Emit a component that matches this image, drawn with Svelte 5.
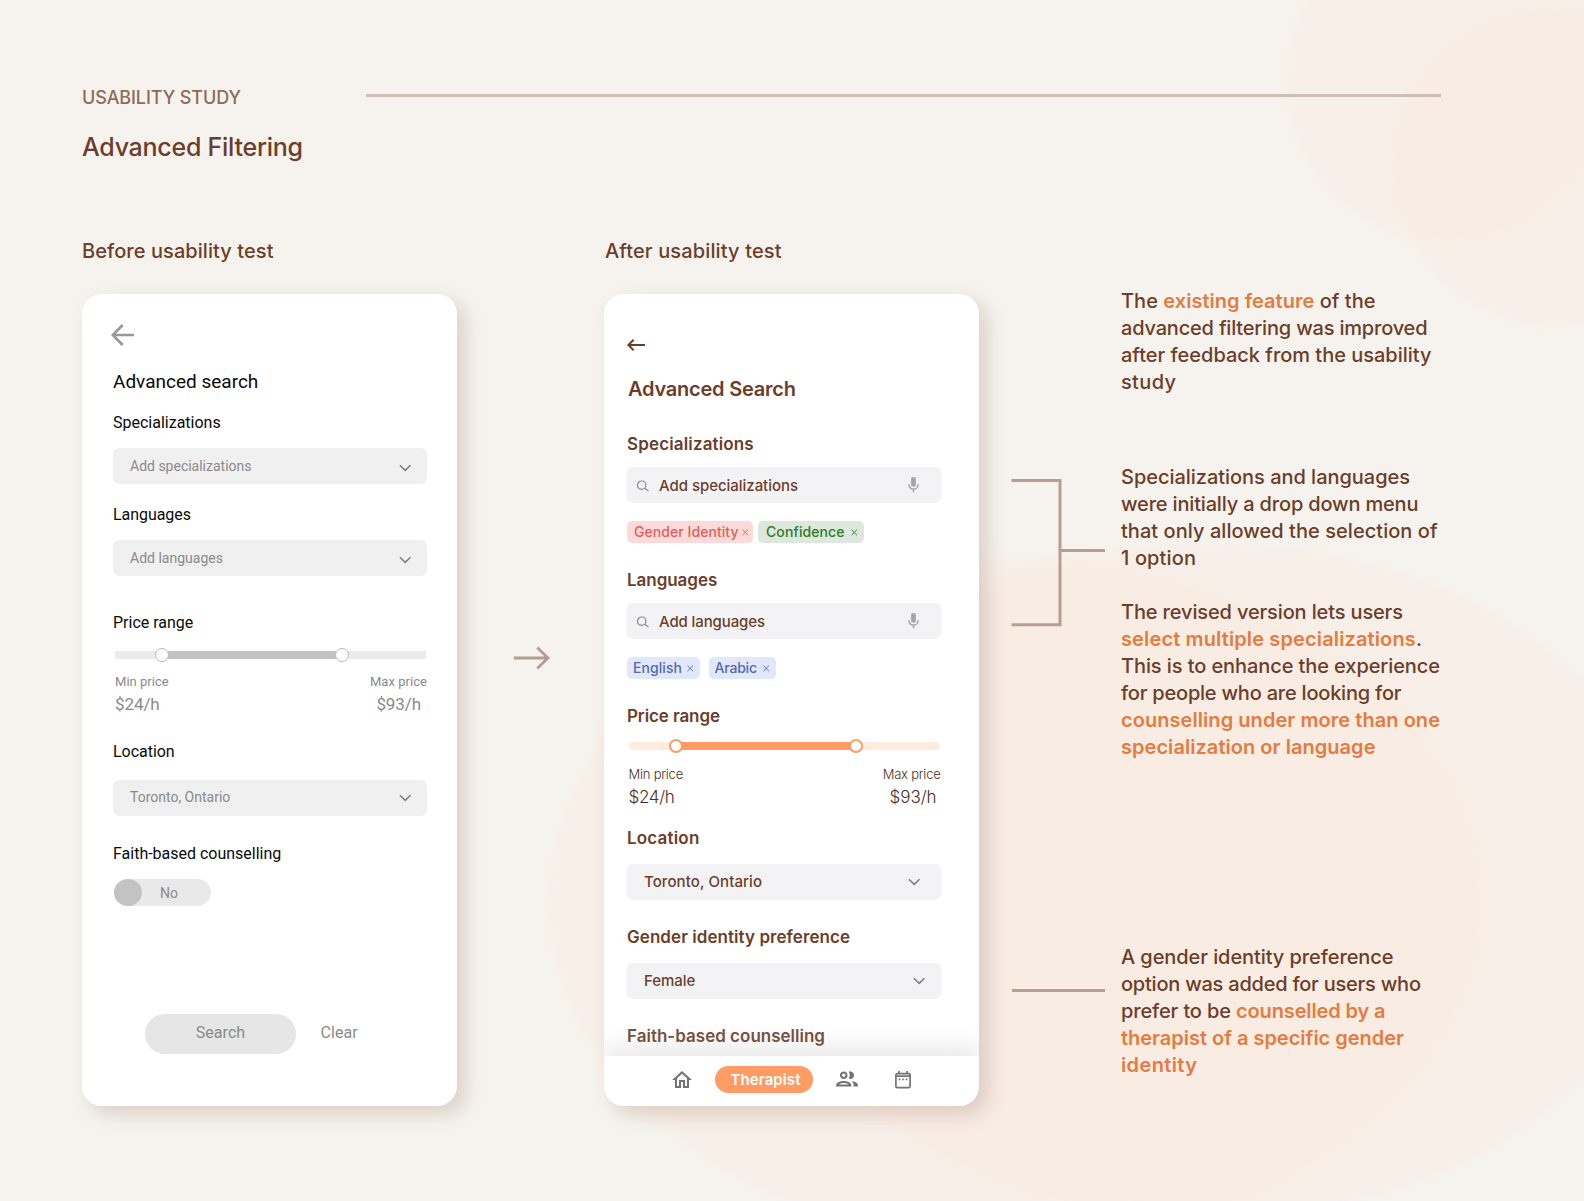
<script>
  // Spreads the letters of a line so that it spans the given width.
  function fit(node, width) {
    const letters = node.textContent.length;
    const natural = node.getBoundingClientRect().width;
    node.style.letterSpacing = `${(width + 1 - natural) / (letters - 1)}px`;
  }

  const notes = [
    {
      kind: 'intro',
      lines: [
        [253.5, ['The '], ['existing feature', true], [' of the']],
        [305.5, ['advanced filtering was improved']],
        [309.5, ['after feedback from the usability']],
        [54, ['study']]
      ]
    },
    {
      kind: 'menus',
      lines: [
        [288, ['Specializations and languages']],
        [296.5, ['were initially a drop down menu']],
        [315.5, ['that only allowed the selection of']],
        [74, ['1 option']]
      ]
    },
    {
      kind: 'multiple',
      lines: [
        [281, ['The revised version lets users']],
        [300, ['select multiple specializations', true], ['.']],
        [318, ['This is to enhance the experience']],
        [279.5, ['for people who are looking for']],
        [318, ['counselling under more than one', true]],
        [253.5, ['specialization or language', true]]
      ]
    },
    {
      kind: 'preference',
      lines: [
        [271.5, ['A gender identity preference']],
        [299, ['option was added for users who']],
        [263.5, ['prefer to be '], ['counselled by a', true]],
        [282, ['therapist of a specific gender', true]],
        [75, ['identity', true]]
      ]
    }
  ];
</script>

{#snippet chevron()}
  <svg class="chevron" width="13" height="8" viewBox="0 0 13 8"><path d="M.9 1.2 6.2 6.4 11.5 1.2" /></svg>
{/snippet}

{#snippet cross()}
  <svg class="cross" width="7" height="7" viewBox="0 0 7 7"><path d="M.4.6 6 6.2M6 .6.4 6.2" /></svg>
{/snippet}

{#snippet glass()}
  <svg class="glass" width="13" height="12" viewBox="0 0 13 12"><circle cx="4.7" cy="5.2" r="4.2" /><path d="M7.8 8.2 11.5 10.9" /></svg>
{/snippet}

{#snippet mic()}
  <svg class="mic" width="12" height="16" viewBox="0 0 12 16">
    <rect x="3.1" y="0" width="4.8" height="9.8" rx="2.2" />
    <path d="M.8 7.2a4.7 4.9 0 0 0 9.4 0M5.5 12.3V15.3" />
  </svg>
{/snippet}

<div class="page">
  <svg class="backdrop" width="1584" height="1201" viewBox="0 0 1584 1201">
    <defs>
      <filter id="soft" x="-10%" y="-10%" width="120%" height="120%"><feGaussianBlur stdDeviation="8" /></filter>
    </defs>
    <g fill="#ffcfb6" fill-opacity=".115">
      <circle cx="1448" cy="80" r="163" filter="url(#soft)" />
      <circle cx="1553" cy="168" r="159" filter="url(#soft)" />
      <ellipse cx="1016" cy="902" rx="468" ry="344" filter="url(#soft)" />
      <ellipse cx="1212" cy="880" rx="462" ry="338" filter="url(#soft)" />
    </g>
  </svg>

  <header>
    <div class="eyebrow-row">
      <div class="eyebrow"><span use:fit={158}>USABILITY STUDY</span></div>
      <div class="rule"></div>
    </div>
    <h1 use:fit={220}>Advanced Filtering</h1>
  </header>

  <main>
    <h2 class="before-title" use:fit={190.5}>Before usability test</h2>
    <h2 class="after-title" use:fit={175.5}>After usability test</h2>

    <section class="card before">
      <svg class="back" width="24" height="22" viewBox="0 0 24 22"><path d="M23 11H2M11.6 1 1.8 11l9.8 10" /></svg>
      <h3 use:fit={144.3}>Advanced search</h3>
      <h4 use:fit={106.7}>Specializations</h4>
      <div class="field low"><span use:fit={120.5}>Add specializations</span>{@render chevron()}</div>
      <h4 use:fit={77}>Languages</h4>
      <div class="field low"><span use:fit={92}>Add languages</span>{@render chevron()}</div>
      <h4 class="price" use:fit={79.3}>Price range</h4>
      <div class="slider"><i></i><b></b><b></b></div>
      <div class="ends caption"><span use:fit={52.7}>Min price</span><span use:fit={56}>Max price</span></div>
      <div class="ends amount"><span use:fit={43.7}>$24/h</span><span use:fit={43.7}>$93/h</span></div>
      <h4 class="location" use:fit={60.7}>Location</h4>
      <div class="field place"><span use:fit={99.3}>Toronto, Ontario</span>{@render chevron()}</div>
      <h4 class="faith" use:fit={167.3}>Faith-based counselling</h4>
      <div class="toggle"><i></i><span>No</span></div>
      <div class="actions">
        <div class="search"><span use:fit={48.3}>Search</span></div>
        <span class="clear" use:fit={36.3}>Clear</span>
      </div>
    </section>

    <div class="between">
      <svg width="37" height="24" viewBox="0 0 37 24"><path d="M0 12H34M23.2 1.5 34 12 23.2 22.5" /></svg>
    </div>

    <section class="card after">
      <svg class="back" width="18" height="12" viewBox="0 0 18 12"><path d="M18 6H1.5M6.6.8 1.4 6l5.2 5.2" /></svg>
      <h3 use:fit={168}>Advanced Search</h3>
      <h4 class="first" use:fit={125.7}>Specializations</h4>
      <div class="field entry">{@render glass()}<span use:fit={138}>Add specializations</span>{@render mic()}</div>
      <div class="chips">
        <div class="chip red"><span use:fit={103.5}>Gender Identity</span>{@render cross()}</div>
        <div class="chip green"><span use:fit={77.5}>Confidence</span>{@render cross()}</div>
      </div>
      <h4 use:fit={89.3}>Languages</h4>
      <div class="field entry">{@render glass()}<span use:fit={105}>Add languages</span>{@render mic()}</div>
      <div class="chips languages">
        <div class="chip blue"><span use:fit={48}>English</span>{@render cross()}</div>
        <div class="chip blue arabic"><span use:fit={41.5}>Arabic</span>{@render cross()}</div>
      </div>
      <h4 use:fit={92}>Price range</h4>
      <div class="slider"><i></i><b></b><b></b></div>
      <div class="ends caption"><span use:fit={53.7}>Min price</span><span use:fit={57}>Max price</span></div>
      <div class="ends amount"><span use:fit={45.3}>$24/h</span><span use:fit={46}>$93/h</span></div>
      <h4 class="location" use:fit={71.3}>Location</h4>
      <div class="field place"><span use:fit={117}>Toronto, Ontario</span>{@render chevron()}</div>
      <h4 use:fit={222}>Gender identity preference</h4>
      <div class="field place gender"><span use:fit={50.3}>Female</span>{@render chevron()}</div>
      <h4 use:fit={197}>Faith-based counselling</h4>
      <nav>
        <svg class="home" width="24" height="24" viewBox="0 0 24 24"><path d="M12 5.69l5 4.5V18h-2v-6H9v6H7v-7.81l5-4.5M12 3L2 12h3v8h6v-6h2v6h6v-8h3L12 3z" /></svg>
        <div class="pill"><span use:fit={69}>Therapist</span></div>
        <svg class="people" width="26" height="26" viewBox="0 0 24 24"><path d="M9 13.75c-2.34 0-7 1.17-7 3.5V19h14v-1.75c0-2.33-4.66-3.5-7-3.5zM4.34 17c.84-.58 2.87-1.25 4.66-1.25s3.82.67 4.66 1.25H4.34zM9 12c1.93 0 3.5-1.57 3.5-3.5S10.93 5 9 5 5.5 6.57 5.5 8.5 7.07 12 9 12zm0-5c.83 0 1.5.67 1.5 1.5S9.83 10 9 10s-1.5-.67-1.5-1.5S8.17 7 9 7zm7.04 6.81c1.16.84 1.96 1.96 1.96 3.44V19h4v-1.75c0-2.02-3.5-3.17-5.96-3.44zM15 12c1.93 0 3.5-1.57 3.5-3.5S16.93 5 15 5c-.54 0-1.04.13-1.5.35.63.89 1 1.98 1 3.15s-.37 2.26-1 3.15c.46.22.96.35 1.5.35z" /></svg>
        <svg class="calendar" width="16" height="18" viewBox="0 0 16 18">
          <rect x=".9" y="2.7" width="14.2" height="13.9" rx="1.4" />
          <path d="M1 5.1H15" /><path d="M3.9 0V3M12.1 0V3" />
          <path class="dots" d="M3.7 8.4H5.3M7.2 8.4H8.8M10.7 8.4H12.3" />
        </svg>
      </nav>
    </section>

    <svg class="links" width="142" height="812" viewBox="979 294 142 812">
      <path d="M1011.5 480.5H1060V624.8H1011.5M1060 550.5H1105M1012 990.5H1105" />
    </svg>

    <aside>
      {#each notes as note}
        <p class={note.kind}>
          {#each note.lines as [width, ...parts]}
            <span class="line" use:fit={width}>{#each parts as [text, strong]}{#if strong}<em>{text}</em>{:else}{text}{/if}{/each}</span>
          {/each}
        </p>
      {/each}
    </aside>
  </main>
</div>

<style>
  :global(body) {
    background: #f6f3ee;
  }
  .page {
    position: relative;
    box-sizing: border-box;
    width: 1584px;
    height: 1201px;
    overflow: hidden;
    padding: 84px 0 0 82px;
    color: #6b3d2a;
    font-family: Inter, 'Noto Sans', sans-serif;
    white-space: nowrap;
  }
  .backdrop {
    position: absolute;
    inset: 0;
  }
  header,
  main {
    position: relative;
  }
  h1, h2, h3, h4, p {
    margin: 0;
    width: fit-content;
  }
  svg {
    display: block;
    flex: none;
    fill: none;
  }

  .eyebrow-row {
    display: flex;
    height: 24px;
    align-items: center;
  }
  .eyebrow {
    width: 284px;
    padding-top: 3px;
    font-size: 18px;
    font-weight: 450;
    line-height: 24px;
    color: #8f6a5a;
  }
  .rule {
    width: 1075px;
    height: 3px;
    margin-bottom: 1px;
    background: #cfbeb4;
  }
  h1 {
    margin-top: 23px;
    font-size: 25px;
    font-weight: 500;
    line-height: 32px;
  }

  main {
    display: grid;
    grid-template-columns: 375px 147px 375px 142px auto;
    grid-template-rows: 28px 812px;
    row-gap: 29px;
    margin-top: 74px;
  }
  h2 {
    font-size: 20px;
    font-weight: 500;
    line-height: 28px;
  }
  .after-title {
    grid-column: 3;
    margin-left: 1px;
  }
  .card {
    grid-row: 2;
    box-sizing: border-box;
    display: flex;
    flex-direction: column;
    overflow: hidden;
    border-radius: 20px;
    background: #fff;
    box-shadow: 8px 8px 20px rgba(107, 58, 38, 0.19);
  }
  .between {
    grid-area: 2 / 2;
    padding: 352px 0 0 57px;
  }
  .between path {
    stroke: #b59c90;
    stroke-width: 2.8;
  }
  .links {
    grid-area: 2 / 4;
  }
  .links path {
    stroke: #b79e90;
    stroke-width: 3;
  }

  h4 {
    line-height: 20px;
  }
  .field {
    box-sizing: border-box;
    display: flex;
    justify-content: space-between;
    flex: none;
    height: 36px;
    border-radius: 6px;
  }
  .chevron {
    stroke: #7d7d7d;
    stroke-width: 1.5;
  }
  .slider {
    display: grid;
    grid-template-columns: 47px 180px 84px;
    align-items: center;
    height: 14px;
    margin-left: 2px;
  }
  .slider i {
    grid-area: 1 / 1 / 2 / 4;
    height: 8px;
  }
  .slider b {
    grid-row: 1;
    grid-column: 3;
    box-sizing: border-box;
    width: 14px;
    height: 14px;
    margin-left: -7px;
    border-radius: 50%;
    background: #fff;
  }
  .slider b:first-of-type {
    grid-column: 2;
  }
  .ends {
    display: flex;
    justify-content: space-between;
    margin-left: 2px;
  }
  .caption {
    font-size: 13px;
    line-height: 16px;
  }
  .amount {
    font-size: 17px;
    line-height: 20px;
  }

  .before {
    grid-column: 1;
    padding: 30px 30px 0 31px;
    font-family: Roboto, sans-serif;
    color: #8a8a8a;
  }
  .before .back {
    margin-left: -2px;
    stroke: #989898;
    stroke-width: 2.7;
  }
  .before h3,
  .before h4 {
    color: #0a0a0a;
    font-weight: 400;
  }
  .before h3 {
    margin: 23px 0 -2px;
    font-size: 19px;
    line-height: 26px;
  }
  .before h4 {
    margin: 20px 0 -2px;
    font-size: 16px;
    line-height: 22px;
  }
  .before h3 + h4 {
    margin-top: 19px;
  }
  .before h4.price {
    margin-top: 36px;
  }
  .before .field {
    margin-top: 16px;
    padding: 0 15px 0 17px;
    background: #f0f0f0;
    font-size: 14px;
    line-height: 36px;
  }
  .before .chevron {
    margin-top: 16px;
  }
  .before .slider {
    margin-top: 16px;
  }
  .before .slider i {
    background: linear-gradient(to right, #ebebeb 47px, #c3c3c3 47px 227px, #ebebeb 227px);
  }
  .before .slider b {
    border: 1px solid #b9b9b9;
  }
  .before .caption {
    margin-top: 12px;
  }
  .before .amount {
    margin-top: 4px;
    padding-right: 6px;
  }
  .before h4.location,
  .before h4.faith {
    margin-top: 27px;
  }
  .before .place {
    margin-top: 19px;
    line-height: 34px;
  }
  .before .place .chevron {
    margin-top: 14px;
  }
  .toggle {
    display: flex;
    width: 97px;
    height: 27px;
    margin: 16px 0 0 1px;
    border-radius: 14px;
    background: #e9e9e9;
    font-size: 14px;
    line-height: 28px;
  }
  .toggle i {
    width: 28px;
    margin-right: 18px;
    border-radius: 50%;
    background: #c3c3c3;
  }
  .actions {
    display: flex;
    margin: 108px 0 0 32px;
    font-size: 16px;
    line-height: 37px;
  }
  .search {
    width: 151px;
    height: 40px;
    margin-right: 24.5px;
    border-radius: 20px;
    background: #e6e6e6;
    text-align: center;
  }

  .after {
    grid-column: 3;
    padding-top: 45px;
  }
  .after > :not(nav) {
    margin-left: 23px;
  }
  .after .back {
    stroke: #6b3d2a;
    stroke-width: 2;
  }
  .after h3 {
    margin-top: 26px;
    padding-left: 1px;
    font-size: 20px;
    font-weight: 600;
    line-height: 24px;
  }
  .after h4 {
    margin-top: 27px;
    font-size: 17px;
    font-weight: 600;
  }
  .after h4.first {
    margin-top: 33px;
  }
  .after h4.location {
    margin-top: 21px;
  }
  .after h4:last-of-type {
    color: #7a5241;
  }
  .after .field {
    width: 314px;
    margin-top: 13px;
    background: #f3f3f6;
    font-size: 15px;
    font-weight: 500;
    line-height: 37px;
  }
  .entry .glass {
    margin: 13px 9px 0 10px;
    stroke: #8a8a8e;
    stroke-width: 1.2;
  }
  .entry .mic {
    margin: 10px 21px 0 auto;
  }
  .mic rect {
    fill: #a5a5a5;
  }
  .mic path {
    stroke: #a5a5a5;
    stroke-width: 1.5;
  }
  .after .place {
    margin-top: 16px;
    padding: 0 20px 0 17px;
    line-height: 35px;
  }
  .after .gender {
    padding-right: 15px;
  }
  .after .chevron {
    margin-top: 14px;
  }
  .chips {
    display: flex;
    gap: 5px;
    margin-top: 18px;
  }
  .chips.languages {
    gap: 9px;
  }
  .chip {
    box-sizing: border-box;
    display: flex;
    align-items: center;
    justify-content: space-between;
    width: 126px;
    height: 22px;
    padding: 0 4px 0 7px;
    border-radius: 5px;
    font-size: 14px;
    font-weight: 500;
    line-height: 22px;
  }
  .red {
    background: #fcdad9;
    color: #de5f5f;
    stroke: #de5f5f;
  }
  .green {
    width: 106px;
    padding: 0 6px 0 8px;
    background: #dde7de;
    color: #2f7d1e;
    stroke: #2f7d1e;
  }
  .blue {
    width: 73px;
    padding: 0 6px;
    background: #e1e8fd;
    color: #5468ac;
    stroke: #5468ac;
  }
  .arabic {
    width: 67px;
    padding-left: 5.5px;
  }
  .chip span {
    stroke: none;
  }
  .cross {
    stroke-width: 0.9;
  }
  .after .slider {
    width: 311px;
    margin: 13px 0 0 25px;
  }
  .after .slider i {
    border-radius: 4px;
    background: linear-gradient(to right, #ffecdd 47px, #fe9c65 47px 227px, #ffecdd 227px);
  }
  .after .slider b {
    border: 2px solid #fe9c65;
  }
  .after .ends {
    width: 312px;
    margin-left: 24.5px;
    color: #4a2e24;
    font-weight: 350;
  }
  .after .caption {
    margin-top: 13px;
  }
  .after .amount {
    box-sizing: border-box;
    margin-top: 5px;
    padding-right: 4px;
  }
  nav {
    position: relative;
    display: flex;
    flex: none;
    height: 50px;
    margin-top: 10px;
    background: #fff;
    box-shadow: 0 -8px 26px rgba(0, 0, 0, 0.1);
  }
  nav svg {
    fill: #737373;
  }
  .home {
    margin: 11.5px 21px 0 66px;
  }
  .pill {
    box-sizing: border-box;
    width: 98px;
    height: 27px;
    margin-top: 10px;
    padding-left: 15.5px;
    border-radius: 14px;
    background: #fe9c65;
    color: #fff;
    font-size: 15px;
    font-weight: 600;
    line-height: 27px;
  }
  .people {
    margin: 9.5px 35px 0 21px;
  }
  nav .calendar {
    margin-top: 14.5px;
    fill: none;
    stroke: #737373;
    stroke-width: 1.7;
  }

  aside {
    grid-area: 1 / 5 / 3 / 6;
    padding-top: 51px;
    font-size: 20px;
    font-weight: 500;
    line-height: 27px;
  }
  .line {
    display: block;
    width: fit-content;
    white-space: pre;
  }
  aside em {
    color: #e57b41;
    font-style: normal;
    font-weight: 600;
  }
  .menus {
    margin-top: 68px;
  }
  .multiple {
    margin-top: 27px;
  }
  .preference {
    margin-top: 183px;
  }
</style>
